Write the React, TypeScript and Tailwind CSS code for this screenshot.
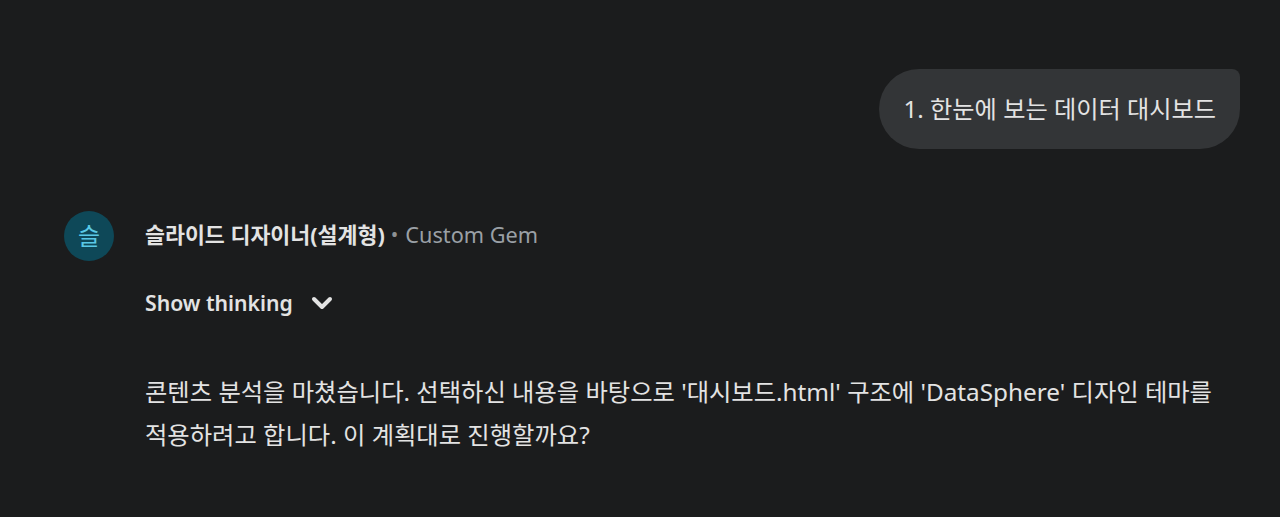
import { ChevronDown } from 'lucide-react';

const font = { fontFamily: '"Noto Sans", "Noto Sans CJK KR", sans-serif' };

function UserBubble({ text }: { text: string }) {
  return (
    <div className="flex justify-end pr-10 pt-[69px]">
      <div className="h-20 flex items-center px-6 bg-[#333537] rounded-[40px] rounded-tr-[8px] text-[24.2px] text-[#e3e3e3]">
        {text}
      </div>
    </div>
  );
}

export default function App() {
  return (
    <div
      className="w-[1280px] h-[517px] bg-[#1b1c1d] text-[#e3e3e3] overflow-hidden"
      style={font}
    >
      <UserBubble text="1. 한눈에 보는 데이터 대시보드" />

      <div className="flex pl-16 mt-[62px]">
        <div className="w-[50px] h-[50px] rounded-full bg-[#0e4858] flex items-center justify-center text-[24px] text-[#5ac8e6] shrink-0">
          슬
        </div>
        <div className="ml-[31px] flex flex-col">
          <div className="h-[50px] -mt-[1px] flex items-center text-[21.7px]">
            <span className="font-bold text-[#e3e3e3]">슬라이드 디자이너(설계형)</span>
            <span className="ml-[6px] mr-[7px] text-[#8e9194] text-[20px] leading-none">•</span>
            <span className="text-[#9aa0a6]">Custom Gem</span>
          </div>
          <button className="mt-[26px] h-[34px] flex items-center gap-[13px] text-[21.2px] font-semibold text-[#e3e3e3] self-start">
            Show thinking
            <ChevronDown className="w-8 h-8" strokeWidth={3} />
          </button>
          <p className="mt-[50px] text-[24.3px] leading-[43px] text-[#e3e3e3] w-[1090px] break-keep">
            콘텐츠 분석을 마쳤습니다. 선택하신 내용을 바탕으로 '대시보드.html' 구조에 'DataSphere' 디자인 테마를 적용하려고 합니다. 이 계획대로 진행할까요?
          </p>
        </div>
      </div>
    </div>
  );
}
